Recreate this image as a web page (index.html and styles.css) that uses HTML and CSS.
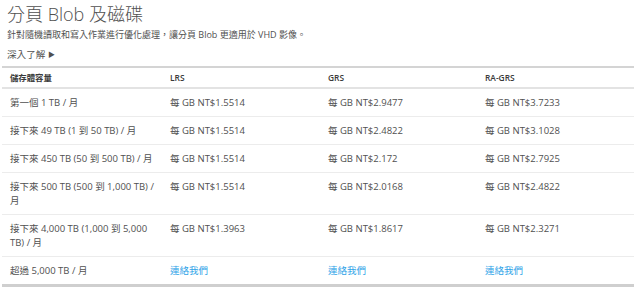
FILE: index.html
```html
<!DOCTYPE html>
<html lang="zh-Hant">
<head>
<meta charset="utf-8">
<link rel="stylesheet" href="styles.css">
</head>
<body>
<div class="page">
  <h1 class="title">分頁 Blob 及磁碟</h1>
  <p class="lead">針對隨機讀取和寫入作業進行優化處理，讓分頁 Blob 更適用於 VHD 影像。</p>
  <p class="more">深入了解 <span class="arrow">&#9654;</span></p>
  <table class="pricing">
    <thead>
      <tr>
        <th class="c1">儲存體容量</th>
        <th class="c2">LRS</th>
        <th class="c3">GRS</th>
        <th class="c4">RA-GRS</th>
      </tr>
    </thead>
    <tbody>
      <tr>
        <td>第一個 1 TB / 月</td>
        <td>每 GB NT$1.5514</td>
        <td>每 GB NT$2.9477</td>
        <td>每 GB NT$3.7233</td>
      </tr>
      <tr>
        <td>接下來 49 TB (1 到 50 TB) / 月</td>
        <td>每 GB NT$1.5514</td>
        <td>每 GB NT$2.4822</td>
        <td>每 GB NT$3.1028</td>
      </tr>
      <tr>
        <td>接下來 450 TB (50 到 500 TB) / 月</td>
        <td>每 GB NT$1.5514</td>
        <td>每 GB NT$2.172</td>
        <td>每 GB NT$2.7925</td>
      </tr>
      <tr>
        <td>接下來 500 TB (500 到 1,000 TB) / 月</td>
        <td>每 GB NT$1.5514</td>
        <td>每 GB NT$2.0168</td>
        <td>每 GB NT$2.4822</td>
      </tr>
      <tr>
        <td>接下來 4,000 TB (1,000 到 5,000 TB) / 月</td>
        <td>每 GB NT$1.3963</td>
        <td>每 GB NT$1.8617</td>
        <td>每 GB NT$2.3271</td>
      </tr>
      <tr>
        <td>超過 5,000 TB / 月</td>
        <td><a class="link" href="#">連絡我們</a></td>
        <td><a class="link" href="#">連絡我們</a></td>
        <td><a class="link" href="#">連絡我們</a></td>
      </tr>
    </tbody>
  </table>
</div>
</body>
</html>
```

FILE: styles.css
```css
html, body {
  margin: 0;
  padding: 0;
  background: #ffffff;
}

body {
  font-family: "Open Sans", "Noto Sans CJK TC", sans-serif;
  color: #505050;
  font-size: 10px;
}

.page {
  padding: 2px 6px 0 2px;
}

.title {
  margin: 0 0 0 5px;
  font-size: 18px;
  font-weight: 300;
  line-height: 24px;
  color: #505050;
}

.lead {
  margin: 0 0 0 5px;
  line-height: 16px;
  padding-top: 1px;
  font-size: 9px;
}

.more {
  margin: 0 0 0 5px;
  padding-top: 4px;
  line-height: 16px;
  font-size: 9.6px;
}

.arrow {
  font-size: 7px;
  vertical-align: 1px;
}

.pricing {
  margin-top: 3px;
  width: 632px;
  border-collapse: collapse;
  border-top: 2px solid #d4d4d4;
  border-bottom: 3px solid #cfcfcf;
  table-layout: fixed;
}

.pricing th,
.pricing td {
  text-align: left;
  vertical-align: top;
  padding: 0 8px;
}

.pricing th {
  font-size: 8.4px;
  font-weight: 600;
  color: #3a3a3a;
  height: 19px;
  line-height: 19px;
  border-bottom: 2px solid #e3e3e3;
}

.pricing td {
  font-size: 9.5px;
  line-height: 14px;
  padding-top: 7px;
  padding-bottom: 6px;
  border-bottom: 1px solid #ececec;
}

.pricing tbody tr:last-child td {
  border-bottom: none;
}

.c1 { width: 144px; }
.c2 { width: 142px; }
.c3 { width: 141px; }
.c4 { width: auto; }

.link {
  color: #2ea3e8;
  text-decoration: none;
}
```
